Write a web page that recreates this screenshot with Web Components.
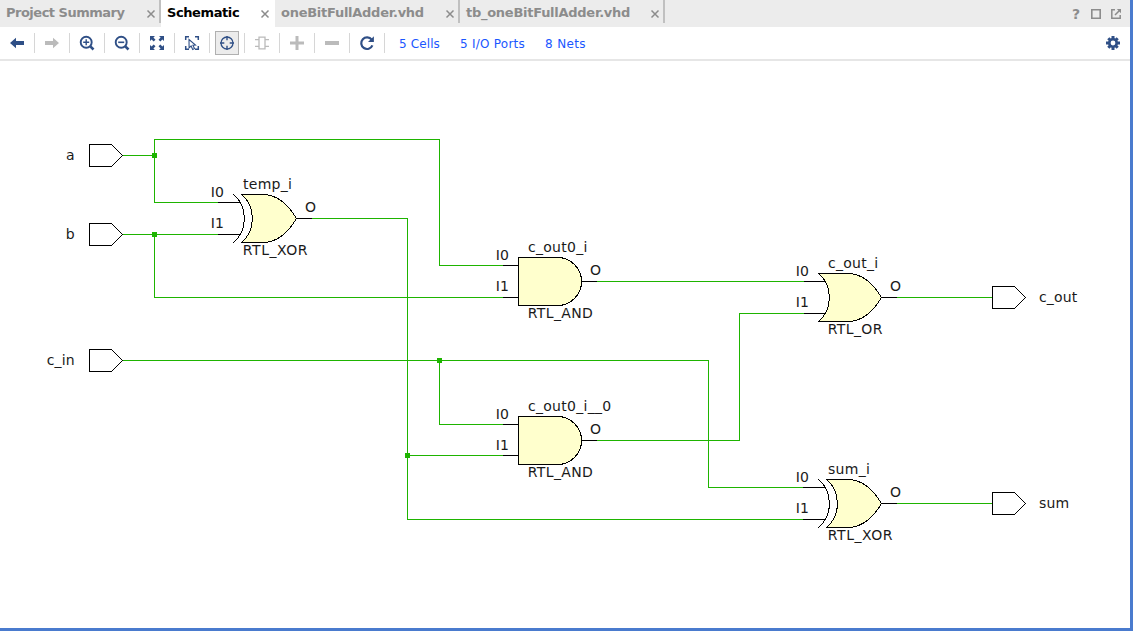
<!DOCTYPE html>
<html lang="en">
<head>
<meta charset="utf-8">
<title>Schematic</title>
<style>
html,body{margin:0;height:100%;overflow:hidden;background:#fff}
body{font-family:"DejaVu Sans",sans-serif;font-size:13px;color:#000}
</style>
</head>
<body>
<schematic-window></schematic-window>
<script>
const shadow = (host, html) => {
  const t = document.createElement('template');
  t.innerHTML = html;
  host.attachShadow({mode:'open'}).append(t.content.cloneNode(true));
};

/* Tool icons, 20x20 with the centre at 10,10 */
const ICONS = {
  back:'<path fill="currentColor" d="M3 10 9 4.800v3.200h8v4H9v3.200z"/>',
  forward:'<path fill="currentColor" d="M17 10 11 4.800v3.200H3v4h8v3.200z"/>',
  zoomin:'<g fill="none" stroke="currentColor"><circle cx="9.2" cy="9.2" r="5.5" stroke-width="1.9"/><path stroke-width="2.6" d="m13.3 13.3 3.2 3.2"/><path stroke-width="1.4" d="M6.2 9.2h6M9.2 6.2v6"/></g>',
  zoomout:'<g fill="none" stroke="currentColor"><circle cx="9.2" cy="9.2" r="5.5" stroke-width="1.9"/><path stroke-width="2.6" d="m13.3 13.3 3.2 3.2"/><path stroke-width="1.6" d="M6.2 9.3h6"/></g>',
  fit:'<path fill="currentColor" d="M3 3h5L6.400 4.600 8.500 6.700 6.700 8.500 4.600 6.400 3 8zM17 3v5l-1.600-1.600-2.100 2.100-1.800-1.800 2.100-2.100L12 3zM3 17v-5l1.600 1.600 2.100-2.100 1.800 1.800-2.100 2.100L8 17zM17 17h-5l1.600-1.600-2.100-2.100 1.800-1.800 2.100 2.100L17 12z"/>',
  select:'<g fill="none" stroke="currentColor"><path stroke-width="1.500" d="M3.700 7V3.700H7M13 3.700h3.300V7M3.700 13v3.300H7M13 16.300h3.300V13"/><path stroke-width="1.100" d="m7 6.500.1 8.300 2-1.800 1.600 3.400 1.800-.9-1.600-3.300 2.600-.2z"/></g>',
  target:'<g fill="none" stroke="currentColor"><circle cx="10" cy="10" r="6" stroke-width="1.300"/><path stroke-width="1.400" d="M10 3v4.300M10 12.700V17M3 10h4.300M12.700 10H17"/></g>',
  cell:'<path fill="none" stroke="currentColor" stroke-width="1.300" d="M7 4.200h6v11.600H7zM3 6.700h4M3 13.300h4M13 6.700h4M13 13.300h4"/>',
  plus:'<path fill="currentColor" d="M8.500 3h3v5.500H17v3h-5.500V17h-3v-5.500H3v-3h5.500z"/>',
  minus:'<path fill="currentColor" d="M3 8h14v4H3z"/>',
  reload:'<path fill="none" stroke="currentColor" stroke-width="2.200" d="M14.700 6.700A5.800 5.800 0 1 0 15.400 12.400"/><path fill="currentColor" d="M16.900 3.200v5.900h-5.900z"/>',
  gear:'<g stroke="currentColor"><path stroke-width="3" d="M10 3v14M3 10h14M5.300 5.300l9.400 9.400M14.700 5.300l-9.400 9.400"/><circle cx="10" cy="10" r="3.700" fill="#fff" stroke-width="2.600"/></g>',
  maximize:'<path fill="none" stroke="currentColor" stroke-width="1.600" d="M5.800 5.800h8.400v8.400H5.800z"/>',
  popout:'<path fill="none" stroke="currentColor" stroke-width="1.500" d="M9 5.800H5.800v8.400h8.400V11M9 11l4.500-4.500"/><path fill="currentColor" d="M10.800 5H15v4.200z"/>'
};

customElements.define('tool-icon', class extends HTMLElement {
  connectedCallback(){
    shadow(this, `<style>:host{display:block;width:20px;height:20px}svg{display:block}</style>
      <svg width="20" height="20" viewBox="0 0 20 20">${ICONS[this.getAttribute('name')]}</svg>`);
  }
});

customElements.define('tool-button', class extends HTMLElement {
  connectedCallback(){
    shadow(this, `<style>
      :host{display:flex;align-items:center;justify-content:center;flex:none;box-sizing:border-box;width:35px;height:20px;border-right:1px solid #d6d6d6;color:#2f4f86}
      :host([disabled]){color:#bbb}
      div{display:flex;align-items:center;justify-content:center;width:22px;height:22px;margin:-2px 0;border:1px solid transparent;flex:none}
      :host([active]) div{background:#ececec;border-color:#b0b0b0}
      </style><div><tool-icon name="${this.getAttribute('icon')}"></tool-icon></div>`);
  }
});

customElements.define('editor-tab', class extends HTMLElement {
  connectedCallback(){
    shadow(this, `<style>
      :host{display:flex;box-sizing:border-box;height:27px;flex:none;position:relative;padding:0 5px 0 6px;color:#8c8c8c;font-weight:bold;font-size:13px;line-height:26px;justify-content:space-between;white-space:nowrap}
      :host([active]){background:#fff;color:#000}
      svg{margin-top:9px;flex:none}
      i{width:2px;height:23px;background:#c0c0c0;position:absolute;right:0;top:0}
      :host(:not([divider])) i{display:none}
      </style><span><slot></slot></span>
      <svg width="10" height="10" viewBox="0 0 10 10"><path d="m1.500 1.500 7 7m0-7-7 7" stroke="#8c8c8c" stroke-width="1.500"/></svg><i></i>`);
  }
});

customElements.define('tab-strip', class extends HTMLElement {
  connectedCallback(){
    shadow(this, `<style>
      :host{display:flex;height:27px;background:#ececec;color:#8c8c8c}
      nav{display:flex}
      .actions{margin-left:auto;display:flex;align-items:center;padding-right:4px}
      b{width:20px;text-align:center;line-height:26px;font-size:14px}
      </style><nav><slot></slot></nav>
      <div class="actions"><b>?</b><tool-icon name="maximize"></tool-icon><tool-icon name="popout"></tool-icon></div>`);
  }
});

customElements.define('tool-bar', class extends HTMLElement {
  connectedCallback(){
    shadow(this, `<style>
      :host{display:flex;align-items:center;height:32px;border-bottom:2px solid #e6e6e6;background:#fff}
      .stats{display:flex;gap:20px;padding:1px 0 0 14px;color:#1a56ff;font-size:12px;line-height:20px}
      .end{margin-left:auto;margin-right:7px;color:#2f4f86}
      </style><slot></slot>
      <div class="stats"><slot name="stats"></slot></div>
      <tool-icon class="end" name="gear"></tool-icon>`);
  }
});

const place = el => { el.style.left = el.getAttribute('x') + 'px'; el.style.top = el.getAttribute('y') + 'px'; };
const NODE_CSS = `:host{position:absolute;width:0;height:0}
  svg{position:absolute;left:0;top:0;width:1px;height:1px;overflow:visible}
  path{stroke:#000;fill:none;shape-rendering:crispEdges}
  text{font:14px "DejaVu Sans",sans-serif;fill:#1a1a1a}`;

customElements.define('io-port', class extends HTMLElement {
  connectedCallback(){
    place(this);
    const out = this.hasAttribute('output');
    shadow(this, `<style>${NODE_CSS}path{fill:#fff}text{letter-spacing:.15px}</style>
      <svg><path d="M.5-10.500H22.500L33.500.500 22.500 11.500H.5z"/>
      <text x="${out ? 47 : -14.3}" y="5" text-anchor="${out ? 'start' : 'end'}">${this.getAttribute('label')}</text></svg>`);
  }
});

const BODIES = {
  AND:'<path d="M-15 8.500H.5M-15 IN1H.5"/><path class="f" d="M.5.5H39.500A24 24 0 0 1 39.500 48.500H.5z"/>',
  OR:'<path d="M-14 8.500H8M-14 IN1H8"/><path class="f" d="M.5.5H29.500C42 .5 54 8.500 63.500 24.500 54 40.500 42 48.500 29.500 48.500H.5C15 36.500 15 12.500 .5.5z"/>',
  XOR:'<path d="M-15 8.500H7M-15 IN1H7M.5.5C15 12.500 15 36.500 .5 48.500"/><path class="f" d="M8.500.5H29.500C42 .5 54 8.500 63.500 24.500 54 40.500 42 48.500 29.500 48.500H8.500C23 36.500 23 12.500 8.500.5z"/>'
};
const TYPE_SPACING = {AND:.35, OR:.35, XOR:.55};

customElements.define('logic-gate', class extends HTMLElement {
  connectedCallback(){
    place(this);
    const type = this.getAttribute('type');
    const in1 = this.getAttribute('in1') || 40;
    shadow(this, `<style>${NODE_CSS}.f{fill:#ffffcd}.name{letter-spacing:.28px}.type{letter-spacing:${TYPE_SPACING[type]}px}</style>
      <svg>${BODIES[type].replaceAll('IN1', +in1 + .5)}<path d="M63 24.500H79"/>
      <text class="name" x="10" y="-5">${this.getAttribute('name')}</text>
      <text class="type" x="9.800" y="61">RTL_${type}</text>
      <text x="-22.200" y="3">I0</text><text x="-22.200" y="34">I1</text>
      <text x="72" y="18">O</text></svg>`);
  }
});

customElements.define('schematic-canvas', class extends HTMLElement {
  connectedCallback(){
    shadow(this, `<style>
      :host{display:block;position:relative;flex:1;min-height:0;background:#fff}
      svg{position:absolute;left:0;top:0;width:100%;height:100%}
      </style>
      <svg><g transform="translate(.5 -60.500)" fill="none" stroke="#1eb400" shape-rendering="crispEdges">
        <path d="M122 155H154M218 202H154V139H439V265H503"/>
        <path d="M122 234H218M154 234V297H503"/>
        <path d="M311 218H407V519H804M407 455H503"/>
        <path d="M122 360H708V487H804M439 360V424H503"/>
        <path d="M596 281H804M596 440H739V313H804M896 297H992M896 503H992"/>
        <path fill="#1eb400" d="M152 153h4v4h-4zM152 232h4v4h-4zM437 358h4v4h-4zM405 453h4v4h-4z"/>
      </g></svg><slot></slot>`);
  }
});

customElements.define('schematic-window', class extends HTMLElement {
  connectedCallback(){
    shadow(this, `<style>
      :host{display:flex;flex-direction:column;box-sizing:border-box;width:1133px;height:631px;border-right:3px solid #4a7bce;border-bottom:3px solid #4a7bce}
      </style>
      <tab-strip>
        <editor-tab divider style="width:161px;letter-spacing:-.5px">Project Summary</editor-tab>
        <editor-tab active style="width:114px;letter-spacing:-.4px">Schematic</editor-tab>
        <editor-tab divider style="width:185px;letter-spacing:-.27px">oneBitFullAdder.vhd</editor-tab>
        <editor-tab divider style="width:205px;letter-spacing:-.27px">tb_oneBitFullAdder.vhd</editor-tab>
      </tab-strip>
      <tool-bar>
        <tool-button icon="back"></tool-button><tool-button icon="forward" disabled></tool-button>
        <tool-button icon="zoomin"></tool-button><tool-button icon="zoomout"></tool-button>
        <tool-button icon="fit"></tool-button><tool-button icon="select"></tool-button>
        <tool-button icon="target" active></tool-button><tool-button icon="cell" disabled></tool-button>
        <tool-button icon="plus" disabled></tool-button><tool-button icon="minus" disabled></tool-button>
        <tool-button icon="reload"></tool-button>
        <span slot="stats" style="letter-spacing:.12px">5 Cells</span><span slot="stats" style="letter-spacing:.25px">5 I/O Ports</span><span slot="stats" style="letter-spacing:.35px">8 Nets</span>
      </tool-bar>
      <schematic-canvas>
        <io-port x="89" y="94" label="a"></io-port>
        <io-port x="89" y="173" label="b"></io-port>
        <io-port x="89" y="299" label="c_in"></io-port>
        <io-port x="992" y="236" label="c_out" output></io-port>
        <io-port x="992" y="442" label="sum" output></io-port>
        <logic-gate type="XOR" x="233" y="133" name="temp_i"></logic-gate>
        <logic-gate type="AND" x="518" y="196" name="c_out0_i"></logic-gate>
        <logic-gate type="AND" x="518" y="355" in1="39" name="c_out0_i__0"></logic-gate>
        <logic-gate type="OR" x="818" y="212" name="c_out_i"></logic-gate>
        <logic-gate type="XOR" x="818" y="418" name="sum_i"></logic-gate>
      </schematic-canvas>`);
  }
});
</script>
</body>
</html>
